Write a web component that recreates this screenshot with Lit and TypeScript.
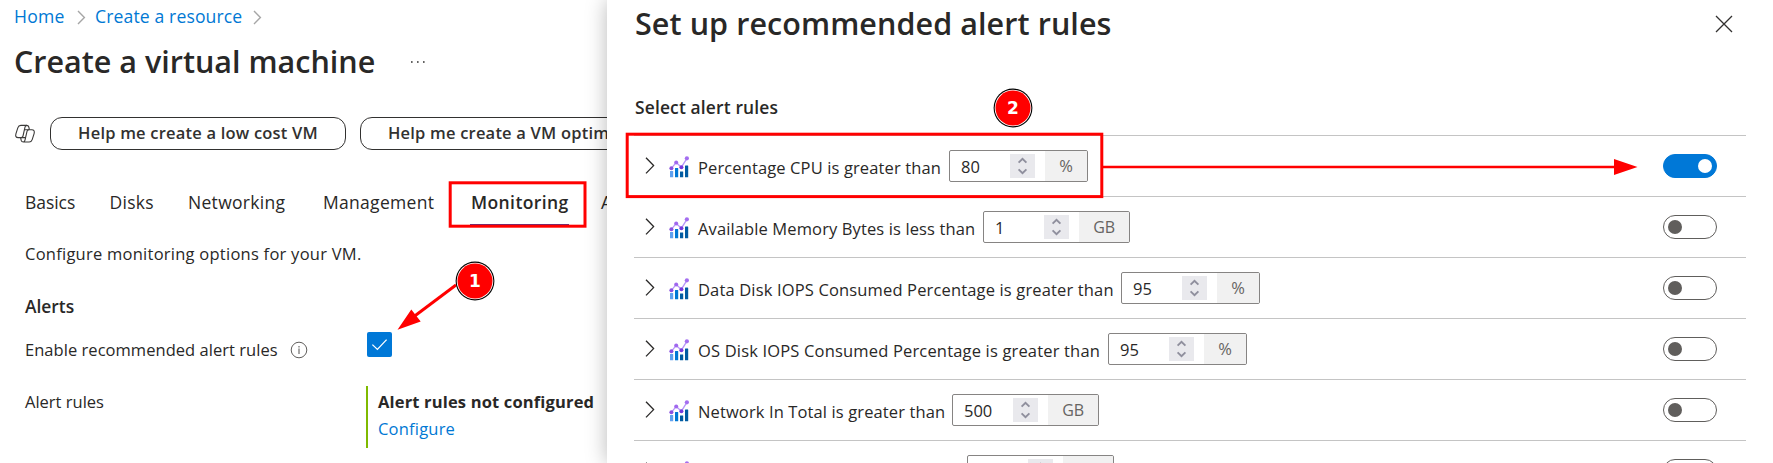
import { LitElement, html, css, svg } from "lit";
import { customElement, property } from "lit/decorators.js";
import { classMap } from "lit/directives/class-map.js";

interface Rule {
  label: string;
  labelWidth: number;
  spacing: number;
  value: string;
  unit: string;
  on: boolean;
}

const RULES: Rule[] = [
  { label: "Percentage CPU is greater than", labelWidth: 251, spacing: 0.12, value: "80", unit: "%", on: true },
  { label: "Available Memory Bytes is less than", labelWidth: 285, spacing: 0.12, value: "1", unit: "GB", on: false },
  { label: "Data Disk IOPS Consumed Percentage is greater than", labelWidth: 423, spacing: 0.15, value: "95", unit: "%", on: false },
  { label: "OS Disk IOPS Consumed Percentage is greater than", labelWidth: 410, spacing: 0.17, value: "95", unit: "%", on: false },
  { label: "Network In Total is greater than", labelWidth: 254, spacing: 0.12, value: "500", unit: "GB", on: false },
  { label: "Network Out Total is greater than", labelWidth: 269, spacing: 0.12, value: "200", unit: "GB", on: false },
];

@customElement("alert-rule")
class AlertRule extends LitElement {
  @property({ attribute: false }) rule!: Rule;

  static styles = css`
    :host {
      display: flex;
      align-items: center;
      flex: none;
      box-sizing: border-box;
      height: 61px;
      border-top: 1px solid #c4c4c4;
      padding: 0 29px 0 11px;
      font-size: 16.5px;
      color: #292827;
    }
    .expand {
      flex: none;
      width: 10px;
      height: 18px;
      margin-right: 14px;
    }
    .metric {
      flex: none;
      width: 21px;
      height: 22px;
      margin: 2px 8px 0 0;
    }
    .label {
      flex: none;
      padding-top: 3px;
      line-height: 24px;
      white-space: nowrap;
    }
    .field {
      display: flex;
      flex: none;
      box-sizing: border-box;
      height: 32px;
      border: 1px solid #868483;
      border-radius: 2px;
      overflow: hidden;
      line-height: 24px;
    }
    .value {
      width: 48px;
      padding: 4px 0 0 11px;
      line-height: 24px;
    }
    .spinner {
      width: 25px;
      height: 24px;
      margin: 3px 10px 0 1px;
      background: #e9e9ed;
    }
    .unit {
      width: 42px;
      background: #f1f1f1;
      color: #666462;
      text-align: center;
      line-height: 30px;
    }
    .unit.wide {
      width: 50px;
      font-size: 16px;
      letter-spacing: -0.3px;
    }
    .toggle {
      display: flex;
      align-items: center;
      flex: none;
      box-sizing: border-box;
      width: 54px;
      height: 24px;
      margin-left: auto;
      padding: 0 4px;
      border: 1px solid #605e5c;
      border-radius: 12px;
    }
    .toggle.on {
      justify-content: flex-end;
      background: #0078d7;
      border-color: #0078d7;
    }
    .knob {
      width: 14px;
      height: 14px;
      border-radius: 50%;
      background: #605e5c;
    }
    .on .knob {
      background: #fff;
    }
  `;

  render() {
    const r = this.rule;
    return html`
      <svg class="expand" viewBox="0 0 10 18">
        <path d="M1 .8 L8.6 8.6 L1 16.4" fill="none" stroke="#292827" stroke-width="1.3" />
      </svg>
      <svg class="metric" viewBox="0 0 21 22">
        <rect x="1" y="15" width="3.2" height="6.3" rx=".3" fill="#5ea0ef" />
        <rect x="6" y="12" width="3.2" height="9.3" rx=".3" fill="#0078d4" />
        <rect x="11" y="15.5" width="3.2" height="5.8" rx=".3" fill="#005ba1" />
        <rect x="16" y="9.6" width="3.2" height="11.7" rx=".3" fill="#005ba1" />
        <path d="M2.4 12.3 L7.2 6.4 L12.4 11.2 L17.9 2.3" fill="none" stroke="#b796f9" stroke-width="1.3" />
        <circle cx="2.4" cy="12.3" r="2" fill="#8a50e0" />
        <circle cx="7.2" cy="6.4" r="2" fill="#a067ee" />
        <circle cx="12.4" cy="11.2" r="2" fill="#773adc" />
        <circle cx="17.9" cy="2.3" r="2.1" fill="#a46ef0" />
      </svg>
      <span class="label" style="width:${r.labelWidth}px;letter-spacing:${r.spacing}px">${r.label}</span>
      <div class="field">
        <span class="value">${r.value}</span>
        <svg class="spinner" viewBox="0 0 25 24">
          <path d="M8.6 8.6 L12.5 4.8 L16.4 8.6 M8.6 15.4 L12.5 19.2 L16.4 15.4" fill="none" stroke="#8f8f9d" stroke-width="1.9" />
        </svg>
        <span class=${classMap({ unit: true, wide: r.unit === "GB" })}>${r.unit}</span>
      </div>
      <div class=${classMap({ toggle: true, on: r.on })}><span class="knob"></span></div>
    `;
  }
}

@customElement("app-root")
class AppRoot extends LitElement {
  static styles = css`
    :host {
      display: flex;
      position: relative;
      width: 1773px;
      height: 463px;
      overflow: hidden;
      background: #fff;
      color: #292827;
      font: 16.5px "Open Sans", "Noto Sans", sans-serif;
      white-space: nowrap;
    }
    .page {
      flex: none;
      width: 607px;
      height: 463px;
      overflow: hidden;
    }
    .crumbs {
      display: flex;
      align-items: center;
      height: 32px;
      padding-left: 14px;
      font-size: 17.6px;
      color: #0078d4;
    }
    .crumbs .home {
      width: 63px;
      letter-spacing: 0.2px;
    }
    .crumbs .create {
      width: 158px;
      letter-spacing: 0.12px;
    }
    .sep {
      width: 9px;
      height: 15px;
      margin: 2px 9px 0 0;
    }
    .title {
      display: flex;
      align-items: center;
      height: 58px;
      padding-left: 14px;
    }
    h1 {
      margin: 0;
      font-size: 30.5px;
      font-weight: 600;
      line-height: 46px;
    }
    .title h1 {
      width: 396px;
    }
    .more {
      width: 16px;
      height: 4px;
      margin-top: 2px;
    }
    .prompts {
      display: flex;
      align-items: center;
      gap: 14px;
      margin-top: 27px;
      padding-left: 14px;
    }
    .copilot {
      flex: none;
      width: 22px;
      height: 20px;
    }
    .pill {
      flex: none;
      box-sizing: border-box;
      width: 296px;
      height: 33px;
      border: 1px solid #323130;
      border-radius: 12px;
      text-align: center;
      font-weight: 600;
      line-height: 29px;
      color: #323130;
      letter-spacing: 0.2px;
    }
    .pill.long {
      width: 340px;
      padding-left: 27px;
      text-align: left;
    }
    .tabs {
      display: grid;
      grid-template-columns: 84.5px 78.5px 135px 147px 131px auto;
      height: 44px;
      margin-top: 31px;
      padding-left: 25px;
      font-size: 17.5px;
      line-height: 43px;
      letter-spacing: 0.3px;
    }
    .tabs .tight {
      letter-spacing: -0.05px;
    }
    .tabs .selected {
      box-sizing: border-box;
      width: 99px;
      padding-left: 1px;
      border-bottom: 2px solid #4b3a94;
      font-weight: 600;
      letter-spacing: 0.4px;
    }
    .form {
      padding-left: 25px;
    }
    .intro {
      line-height: 58px;
      height: 59px;
      letter-spacing: 0.25px;
    }
    h2 {
      margin: 0;
      font-size: 17.4px;
      font-weight: 600;
    }
    .form h2 {
      height: 46px;
      line-height: 45px;
    }
    .row {
      display: grid;
      grid-template-columns: 341px auto;
      align-items: start;
    }
    .enable {
      display: flex;
      align-items: center;
      height: 39px;
      gap: 12px;
      line-height: 24px;
      letter-spacing: 0.04px;
    }
    .info {
      width: 18px;
      height: 18px;
    }
    .check {
      width: 25px;
      height: 25px;
      margin: 2px 0 0 1px;
      border-radius: 2px;
      background: #0078d7;
    }
    .status {
      margin-top: 17px;
      line-height: 27px;
    }
    .status .name {
      padding-top: 2px;
    }
    .state {
      box-sizing: border-box;
      height: 62px;
      padding: 2px 0 0 10px;
      border-left: 2px solid #7fba00;
    }
    .state b {
      display: block;
      font-weight: 700;
      letter-spacing: 0.16px;
    }
    .link {
      color: #0078d4;
      letter-spacing: 0.2px;
    }
    .panel {
      position: relative;
      flex: 1;
      height: 463px;
      box-sizing: border-box;
      padding: 0 27px;
      background: #fff;
      box-shadow: 0 0 20px rgba(0, 0, 0, 0.28);
      display: flex;
      flex-direction: column;
    }
    .head {
      display: flex;
      flex: none;
      align-items: center;
      justify-content: space-between;
      height: 46px;
      padding: 0 13px 0 1px;
    }
    .head h1 {
      letter-spacing: 0.08px;
    }
    .close {
      width: 18px;
      height: 18px;
      margin-top: 2px;
    }
    .panel h2 {
      flex: none;
      padding: 34px 0 0 1px;
      line-height: 55px;
      letter-spacing: 0.16px;
    }
    .marks {
      position: absolute;
      inset: 0;
      pointer-events: none;
    }
    .marks text {
      font: 700 17px "DejaVu Sans", sans-serif;
      fill: #fff;
      text-anchor: middle;
    }
  `;

  private separator() {
    return html`<svg class="sep" viewBox="0 0 9 15">
      <path d="M1 1 L7.4 7.5 L1 14" fill="none" stroke="#a6a6a6" stroke-width="1.4" />
    </svg>`;
  }

  private badge(x: number, y: number, n: string) {
    return svg`
      <circle cx=${x} cy=${y} r="19.4" fill="#000" />
      <circle cx=${x} cy=${y} r="18.3" fill="#fff" />
      <circle cx=${x} cy=${y} r="17.5" fill="#f00" />
      <text x=${x} y=${y + 6.4}>${n}</text>`;
  }

  render() {
    return html`
      <main class="page">
        <nav class="crumbs">
          <span class="home">Home</span>${this.separator()}
          <span class="create">Create a resource</span>${this.separator()}
        </nav>
        <div class="title">
          <h1>Create a virtual machine</h1>
          <svg class="more" viewBox="0 0 16 4">
            <path d="M1 1.2h1.6v1.6h-1.6z M7 1.2h1.6v1.6h-1.6z M13 1.2h1.6v1.6h-1.6z" fill="#323130" />
          </svg>
        </div>
        <div class="prompts">
          <svg class="copilot" viewBox="0 0 22 20" fill="none" stroke="#3b3a39" stroke-width="1.1" stroke-linejoin="round">
            <path d="M6.8 1.4 H12.6 Q14.4 1.4 14.8 3 L15.4 5.6 M6.8 1.4 Q4.6 1.4 3.8 3.8 L1.9 9.8 Q.9 13.6 4.2 13.6 H7 Q8.6 13.6 9 12 L11 3.2 Q11.4 1.4 12.8 1.4" />
            <path d="M15.2 18 H9.4 Q7.6 18 7.2 16.4 L6.6 13.6 M15.2 18 Q17.4 18 18.2 15.6 L20.1 9.6 Q21.1 5.8 17.8 5.8 H15 Q13.4 5.8 13 7.4 L11 16.2 Q10.6 18 9.2 18" />
            <path d="M10.4 5.8 H15 M7 13.6 H11.6" />
          </svg>
          <div class="pill">Help me create a low cost VM</div>
          <div class="pill long">Help me create a VM optimized for</div>
        </div>
        <div class="tabs">
          <span class="tight">Basics</span>
          <span>Disks</span>
          <span>Networking</span>
          <span>Management</span>
          <span class="selected">Monitoring</span>
          <span>Advanced</span>
        </div>
        <section class="form">
          <div class="intro">Configure monitoring options for your VM.</div>
          <h2>Alerts</h2>
          <div class="row">
            <div class="enable">
              <span>Enable recommended alert rules</span>
              <svg class="info" viewBox="0 0 18 18">
                <circle cx="9" cy="9" r="7.8" fill="none" stroke="#605e5c" stroke-width="1" />
                <path d="M9 7.6 V13 M9 5 V6.4" stroke="#605e5c" stroke-width="1.1" />
              </svg>
            </div>
            <svg class="check" viewBox="0 0 25 25">
              <path d="M5.4 12.6 L10.4 17.4 L19.6 7.6" fill="none" stroke="#fff" stroke-width="1.3" />
            </svg>
          </div>
          <div class="row status">
            <span class="name">Alert rules</span>
            <div class="state"><b>Alert rules not configured</b><span class="link">Configure</span></div>
          </div>
        </section>
      </main>
      <aside class="panel">
        <header class="head">
          <h1>Set up recommended alert rules</h1>
          <svg class="close" viewBox="0 0 18 18">
            <path d="M1 1 L17 17 M17 1 L1 17" stroke="#323130" stroke-width="1.3" />
          </svg>
        </header>
        <h2>Select alert rules</h2>
        ${RULES.map((r) => html`<alert-rule .rule=${r}></alert-rule>`)}
      </aside>
      <svg class="marks" width="1773" height="463" viewBox="0 0 1773 463">
        <g fill="none" stroke="#f00" stroke-width="3">
          <rect x="450.2" y="182.8" width="134.8" height="43.4" />
          <rect x="627.2" y="134.2" width="474.6" height="62.4" />
          <path d="M456 285 L412 318" />
          <path d="M1102 167 H1616" stroke-width="2.6" />
        </g>
        <path d="M397.5 329.8 L411.3 309.5 L420.7 321.6 Z M1637.5 167 L1614 159 V175 Z" fill="#f00" />
        ${this.badge(475, 281, "1")} ${this.badge(1013, 108, "2")}
      </svg>
    `;
  }
}
